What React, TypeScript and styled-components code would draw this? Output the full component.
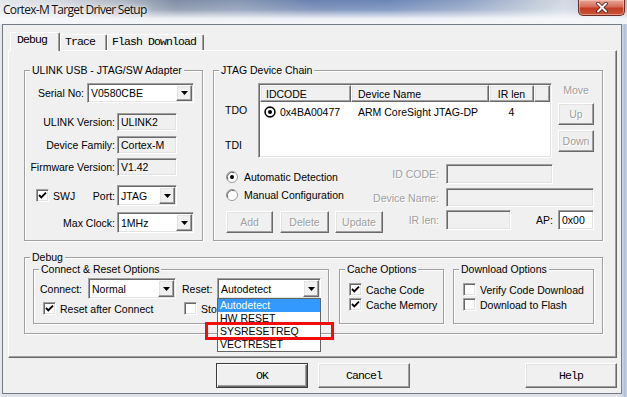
import React from 'react';
import styled, { createGlobalStyle, css } from 'styled-components';

const UI_FONT = '"Liberation Sans", Arial, sans-serif';
const MONO_FONT = '"Liberation Mono", "Courier New", monospace';

const GlobalStyle = createGlobalStyle`
  *, *::before, *::after { box-sizing: border-box; }
  html, body { margin: 0; padding: 0; }
  body {
    background: #dde3ea;
    color: #000;
    font-family: ${UI_FONT};
    font-size: 10.5px;
  }
`;

const sunken = css`
  border: 1px solid;
  border-color: #a0a0a0 #ffffff #ffffff #a0a0a0;
  box-shadow: inset 1px 1px 0 #696969, inset -1px -1px 0 #e3e3e3;
`;

const raised = css`
  border: 1px solid;
  border-color: #ffffff #696969 #696969 #ffffff;
  box-shadow: inset -1px -1px 0 #a0a0a0, inset 1px 1px 0 #e3e3e3;
  background: #f0f0f0;
`;

const disabledText = css`
  color: #a0a0a0;
  text-shadow: 1px 1px 0 #ffffff;
`;

const monoText = css`
  font-family: ${MONO_FONT};
  font-size: 11.5px;
  letter-spacing: -0.9px;
  color: #000;
`;

const Window = styled.div`
  width: 627px;
  height: 397px;
  display: flex;
  flex-direction: column;
  overflow: hidden;
  background: linear-gradient(90deg, #e9ebee 0px, #dfe3e8 3px, #dfe3e8 619px, #d3dce8 622px, #a9bcd6 625px, #cfdae7 627px);
`;

const TitleBar = styled.header`
  height: 24px;
  flex: none;
  display: flex;
  align-items: flex-start;
  justify-content: space-between;
  background:
    linear-gradient(180deg, rgba(246, 247, 249, 0) 0%, rgba(246, 247, 249, 0.2) 40%, rgba(248, 249, 251, 0.92) 78%, #f4f5f7 100%),
    linear-gradient(90deg, #e4e7eb 0%, #d3d8df 10%, #aab3c2 20%, #7f8da5 28%, #8797b3 38%, #6a82b0 50%, #6c86b6 62%, #8ea1c4 74%, #b9c4d6 84%, #d4dae3 90%, #a9b8cf 100%);
`;

const Title = styled.span`
  font-family: "Open Sans", "Liberation Sans", sans-serif;
  font-size: 12px;
  letter-spacing: -0.7px;
  line-height: 20px;
  padding-left: 3px;
  color: #111;
  text-shadow: 0 0 4px #fff, 0 0 8px #fff;
`;

const CloseButton = styled.div`
  width: 47px;
  height: 16px;
  margin-right: 2px;
  border: 1px solid #6b2a22;
  border-top: none;
  border-radius: 0 0 5px 5px;
  background: linear-gradient(180deg, #e8a797 0%, #d86b58 45%, #c13d25 55%, #cc5338 100%);
  box-shadow: inset 0 0 0 1px rgba(255, 210, 200, 0.5);
  display: flex;
  align-items: center;
  justify-content: center;
`;

const Client = styled.main`
  flex: 1;
  margin: 0 5px 3px 2px;
  padding: 7px 4px 0 5px;
  border: 1px solid #737b86;
  background: #f0f0f0;
  display: flex;
  flex-direction: column;
`;

const TabStrip = styled.div`
  display: flex;
  align-items: flex-end;
  height: 19px;
  margin: 0 0 -1px 2px;
  position: relative;
  z-index: 1;
`;

const Tab = styled.div<{ $w: number; $active?: boolean }>`
  width: ${(p) => p.$w}px;
  height: ${(p) => (p.$active ? 19 : 16)}px;
  margin-bottom: ${(p) => (p.$active ? 0 : 1)}px;
  padding-left: ${(p) => (p.$active ? 6 : 4)}px;
  border: 1px solid;
  border-bottom: none;
  border-color: #ffffff #696969 transparent #ffffff;
  border-radius: 2px 2px 0 0;
  box-shadow: inset -1px 0 0 #a0a0a0;
  background: #f0f0f0;
  ${monoText}
  line-height: 14px;
  white-space: nowrap;
`;

const TabPanel = styled.section`
  height: 308px;
  border: 1px solid;
  border-color: #ffffff #696969 #696969 #ffffff;
  box-shadow: inset -1px -1px 0 #a0a0a0;
  padding: 13px 0 0 15px;
`;

const TopRow = styled.div`
  display: flex;
  align-items: flex-start;
`;

const Group = styled.fieldset<{ $w: number; $h: number; $ml?: number; $mt?: number }>`
  margin: ${(p) => p.$mt ?? 0}px 0 0 ${(p) => p.$ml ?? 0}px;
  padding: 0;
  min-width: 0;
  flex: none;
  width: ${(p) => p.$w}px;
  height: ${(p) => p.$h}px;
  border: 1px solid #a0a0a0;
  box-shadow: inset 1px 1px 0 #ffffff, 1px 1px 0 #ffffff;
`;

const Legend = styled.legend`
  margin-left: 5px;
  padding: 0 2px;
  line-height: 13px;
  font-size: 10.5px;
  background: #f0f0f0;
  white-space: nowrap;
`;

const FormRow = styled.div<{ $mt: number; $pl?: number; $top?: boolean }>`
  display: flex;
  align-items: ${(p) => (p.$top ? 'flex-start' : 'center')};
  margin-top: ${(p) => p.$mt}px;
  padding-left: ${(p) => p.$pl ?? 0}px;
`;

const FieldLabel = styled.span<{ $w: number; $gap?: number; $left?: boolean; $ml?: number }>`
  flex: none;
  width: ${(p) => p.$w}px;
  margin: 0 ${(p) => p.$gap ?? 2}px 0 ${(p) => p.$ml ?? 0}px;
  text-align: ${(p) => (p.$left ? 'left' : 'right')};
  white-space: nowrap;
`;

const ComboBox = styled.div<{ $w: number; $h: number }>`
  flex: none;
  width: ${(p) => p.$w}px;
  height: ${(p) => p.$h}px;
  padding: 1px;
  display: flex;
  align-items: stretch;
  background: #ffffff;
  ${sunken}
`;

const ComboText = styled.span`
  flex: 1;
  padding-left: 2px;
  display: flex;
  align-items: center;
  white-space: nowrap;
  overflow: hidden;
`;

const ComboArrow = styled.span`
  flex: none;
  width: 16px;
  display: flex;
  align-items: center;
  justify-content: center;
  ${raised}
`;

const Field = styled.div<{ $w: number; $h: number; $white?: boolean }>`
  flex: none;
  width: ${(p) => p.$w}px;
  height: ${(p) => p.$h}px;
  padding-left: 3px;
  display: flex;
  align-items: center;
  white-space: nowrap;
  background: ${(p) => (p.$white ? '#ffffff' : '#f0f0f0')};
  ${sunken}
`;

const CheckItem = styled.label<{ $w?: number }>`
  display: flex;
  align-items: center;
  flex: none;
  width: ${(p) => (p.$w ? `${p.$w}px` : 'auto')};
  height: 13px;
  white-space: nowrap;
`;

const CheckBox = styled.span`
  flex: none;
  width: 13px;
  height: 13px;
  margin-right: 4px;
  display: flex;
  align-items: center;
  justify-content: center;
  background: #ffffff;
  ${sunken}
`;

const RadioItem = styled.label`
  display: flex;
  align-items: center;
  height: 14px;
  white-space: nowrap;
  gap: 6px;
`;

const PinColumn = styled.div`
  flex: none;
  width: 44px;
  padding-left: 11px;
  display: flex;
  flex-direction: column;
`;

const PinLabel = styled.span<{ $mt: number }>`
  margin-top: ${(p) => p.$mt}px;
  line-height: 13px;
`;

const ListBox = styled.div`
  flex: none;
  width: 294px;
  height: 75px;
  padding: 1px;
  background: #ffffff;
  ${sunken}
`;

const ListHead = styled.div`
  display: flex;
  height: 17px;
`;

const HeadCell = styled.div<{ $w: number; $center?: boolean; $pl?: number }>`
  flex: none;
  width: ${(p) => p.$w}px;
  padding-left: ${(p) => p.$pl ?? 0}px;
  display: flex;
  align-items: center;
  justify-content: ${(p) => (p.$center ? 'center' : 'flex-start')};
  white-space: nowrap;
  ${raised}
`;

const ListRow = styled.div`
  display: flex;
  height: 20px;
`;

const ListCell = styled.div<{ $w: number; $center?: boolean; $pl?: number }>`
  flex: none;
  width: ${(p) => p.$w}px;
  padding-left: ${(p) => p.$pl ?? 0}px;
  display: flex;
  align-items: center;
  gap: 4px;
  justify-content: ${(p) => (p.$center ? 'center' : 'flex-start')};
  white-space: nowrap;
`;

const MoveColumn = styled.div`
  flex: none;
  width: 36px;
  margin-left: 6px;
  display: flex;
  flex-direction: column;
  align-items: center;
`;

const MoveLabel = styled.span`
  line-height: 14px;
  ${disabledText}
`;

const SmallButton = styled.button<{ $w: number; $h?: number; $mt?: number }>`
  flex: none;
  width: ${(p) => p.$w}px;
  height: ${(p) => p.$h ?? 22}px;
  margin: ${(p) => p.$mt ?? 0}px 0 0 0;
  padding: 0;
  font-family: ${UI_FONT};
  font-size: 10.5px;
  ${raised}
  ${disabledText}
`;

const ChainRow = styled.div<{ $mt: number; $h: number }>`
  display: flex;
  align-items: flex-start;
  height: ${(p) => p.$h}px;
  margin-top: ${(p) => p.$mt}px;
  padding: 0 8px 0 12px;
`;

const ChainLeft = styled.div<{ $end?: boolean }>`
  flex: 1;
  display: flex;
  align-self: ${(p) => (p.$end ? 'flex-end' : 'flex-start')};
`;

const ChainRight = styled.div`
  display: flex;
  align-items: center;
`;

const ChainLabel = styled.span<{ $dim?: boolean; $push?: boolean }>`
  margin: 0 ${(p) => (p.$push ? 5 : 7)}px 0 ${(p) => (p.$push ? 'auto' : '0')};
  white-space: nowrap;
  ${(p) => p.$dim && disabledText}
`;

const FieldArea = styled.div`
  width: 148px;
  display: flex;
  align-items: center;
`;

const ButtonGroup = styled.div`
  display: flex;
  gap: 7px;
  & > :last-child {
    margin-left: -1px;
  }
`;

const SubRow = styled.div`
  display: flex;
  align-items: flex-start;
  margin: -1px 0 0 8px;
`;

const ConnectRow = styled.div`
  display: flex;
  align-items: center;
  height: 21px;
  margin-top: 2px;
  padding-left: 6px;
`;

const ResetAnchor = styled.div`
  position: relative;
  flex: none;
`;

const DropList = styled.ul`
  position: absolute;
  top: 20px;
  left: 0;
  z-index: 5;
  width: 104px;
  margin: 0;
  padding: 0;
  list-style: none;
  background: #ffffff;
  border: 1px solid #646464;
`;

const DropItem = styled.li<{ $selected?: boolean }>`
  height: 13px;
  line-height: 13px;
  padding-left: 2px;
  white-space: nowrap;
  background: ${(p) => (p.$selected ? '#3399ff' : 'transparent')};
  color: ${(p) => (p.$selected ? '#ffffff' : '#000000')};
`;

const Highlight = styled.div`
  position: absolute;
  top: 44px;
  left: -12px;
  z-index: 6;
  width: 129px;
  height: 18px;
  border: 3px solid #f20c0c;
`;

const CheckRow = styled.div<{ $mt: number; $pl: number }>`
  display: flex;
  align-items: center;
  margin-top: ${(p) => p.$mt}px;
  padding-left: ${(p) => p.$pl}px;
`;

const ButtonBar = styled.footer`
  display: flex;
  align-items: center;
  margin-top: 5px;
  padding-left: 208px;
`;

const DialogButton = styled.button<{ $default?: boolean; $ml?: string }>`
  flex: none;
  width: 92px;
  height: 25px;
  margin-left: ${(p) => p.$ml ?? '0'};
  padding: 0;
  ${monoText}
  ${raised}
  ${(p) =>
    p.$default &&
    css`
      border: 1px solid #3c3c3c;
      box-shadow: inset 1px 1px 0 #ffffff, inset -1px -1px 0 #696969, inset -2px -2px 0 #a0a0a0;
    `}
`;

const Arrow = () => (
  <svg width="7" height="4" viewBox="0 0 7 4">
    <polygon points="0,0 7,0 3.5,4" fill="#000" />
  </svg>
);

const Tick = () => (
  <svg width="9" height="9" viewBox="0 0 9 9">
    <polyline points="1,4 3.3,6.4 8,1.6" fill="none" stroke="#000" strokeWidth="1.9" />
  </svg>
);

const Radio = ({ checked }: { checked?: boolean }) => (
  <svg width="12" height="12" viewBox="0 0 12 12">
    <circle cx="6" cy="6" r="5.5" fill="#fff" stroke="#9a9a9a" />
    <path d="M1.8 8.5 A5 5 0 0 1 8.5 1.8" fill="none" stroke="#5f5f5f" />
    {checked && <circle cx="6" cy="6" r="2" fill="#000" />}
  </svg>
);

const TargetIcon = () => (
  <svg width="12" height="12" viewBox="0 0 12 12">
    <circle cx="6" cy="6" r="4.9" fill="#fff" stroke="#000" strokeWidth="1.6" />
    <circle cx="6" cy="6" r="2.1" fill="#000" />
  </svg>
);

const CloseGlyph = () => (
  <svg width="14" height="11" viewBox="0 0 14 11">
    <path d="M3 1.5 L11 9.5 M11 1.5 L3 9.5" stroke="#4b1a12" strokeWidth="3.6" strokeLinecap="round" />
    <path d="M3 1.5 L11 9.5 M11 1.5 L3 9.5" stroke="#fff" strokeWidth="2" strokeLinecap="round" />
  </svg>
);

const Combo = ({ w, h = 21, value }: { w: number; h?: number; value: string }) => (
  <ComboBox $w={w} $h={h}>
    <ComboText>{value}</ComboText>
    <ComboArrow>
      <Arrow />
    </ComboArrow>
  </ComboBox>
);

const Check = ({ checked, label, w }: { checked?: boolean; label: string; w?: number }) => (
  <CheckItem $w={w}>
    <CheckBox>{checked && <Tick />}</CheckBox>
    {label}
  </CheckItem>
);

const resetOptions = ['Autodetect', 'HW RESET', 'SYSRESETREQ', 'VECTRESET'];

export default function App() {
  return (
    <>
      <GlobalStyle />
      <Window>
        <TitleBar>
          <Title>Cortex-M Target Driver Setup</Title>
          <CloseButton>
            <CloseGlyph />
          </CloseButton>
        </TitleBar>
        <Client>
          <TabStrip>
            <Tab $w={50} $active>Debug</Tab>
            <Tab $w={47}>Trace</Tab>
            <Tab $w={97}>Flash Download</Tab>
          </TabStrip>
          <TabPanel>
            <TopRow>
              <Group $w={179} $h={177}>
                <Legend>ULINK USB - JTAG/SW Adapter</Legend>
                <FormRow $mt={6}>
                  <FieldLabel $w={59} $gap={3}>Serial No:</FieldLabel>
                  <Combo w={107} h={20} value="V0580CBE" />
                </FormRow>
                <FormRow $mt={10}>
                  <FieldLabel $w={90}>ULINK Version:</FieldLabel>
                  <Field $w={60} $h={18}>ULINK2</Field>
                </FormRow>
                <FormRow $mt={5}>
                  <FieldLabel $w={90}>Device Family:</FieldLabel>
                  <Field $w={60} $h={18}>Cortex-M</Field>
                </FormRow>
                <FormRow $mt={4}>
                  <FieldLabel $w={90}>Firmware Version:</FieldLabel>
                  <Field $w={60} $h={18}>V1.42</Field>
                </FormRow>
                <FormRow $mt={9} $pl={11}>
                  <Check checked label="SWJ" w={54} />
                  <FieldLabel $w={25}>Port:</FieldLabel>
                  <Combo w={60} value="JTAG" />
                </FormRow>
                <FormRow $mt={6}>
                  <FieldLabel $w={90}>Max Clock:</FieldLabel>
                  <Combo w={77} value="1MHz" />
                </FormRow>
              </Group>

              <Group $w={390} $h={177} $ml={10}>
                <Legend>JTAG Device Chain</Legend>
                <FormRow $mt={6} $top>
                  <PinColumn>
                    <PinLabel $mt={21}>TDO</PinLabel>
                    <PinLabel $mt={22}>TDI</PinLabel>
                  </PinColumn>
                  <ListBox>
                    <ListHead>
                      <HeadCell $w={91} $pl={5}>IDCODE</HeadCell>
                      <HeadCell $w={138} $pl={6}>Device Name</HeadCell>
                      <HeadCell $w={45} $center>IR len</HeadCell>
                      <HeadCell $w={16} />
                    </ListHead>
                    <ListRow>
                      <ListCell $w={91} $pl={4}>
                        <TargetIcon />
                        0x4BA00477
                      </ListCell>
                      <ListCell $w={138} $pl={7}>ARM CoreSight JTAG-DP</ListCell>
                      <ListCell $w={45} $center>4</ListCell>
                    </ListRow>
                  </ListBox>
                  <MoveColumn>
                    <MoveLabel>Move</MoveLabel>
                    <SmallButton $w={36} $mt={6} disabled>Up</SmallButton>
                    <SmallButton $w={36} $mt={5} disabled>Down</SmallButton>
                  </MoveColumn>
                </FormRow>

                <ChainRow $mt={6} $h={20}>
                  <ChainLeft $end>
                    <RadioItem>
                      <Radio checked />
                      Automatic Detection
                    </RadioItem>
                  </ChainLeft>
                  <ChainRight>
                    <ChainLabel $dim>ID CODE:</ChainLabel>
                    <FieldArea>
                      <Field $w={107} $h={20} />
                    </FieldArea>
                  </ChainRight>
                </ChainRow>

                <ChainRow $mt={4} $h={19}>
                  <ChainLeft>
                    <RadioItem>
                      <Radio />
                      Manual Configuration
                    </RadioItem>
                  </ChainLeft>
                  <ChainRight>
                    <ChainLabel $dim>Device Name:</ChainLabel>
                    <FieldArea>
                      <Field $w={148} $h={19} />
                    </FieldArea>
                  </ChainRight>
                </ChainRow>

                <ChainRow $mt={3} $h={23}>
                  <ChainLeft $end>
                    <ButtonGroup>
                      <SmallButton $w={47} disabled>Add</SmallButton>
                      <SmallButton $w={49} disabled>Delete</SmallButton>
                      <SmallButton $w={48} disabled>Update</SmallButton>
                    </ButtonGroup>
                  </ChainLeft>
                  <ChainRight>
                    <ChainLabel $dim>IR len:</ChainLabel>
                    <FieldArea>
                      <Field $w={65} $h={20} />
                      <ChainLabel $push>AP:</ChainLabel>
                      <Field $w={36} $h={20} $white>0x00</Field>
                    </FieldArea>
                  </ChainRight>
                </ChainRow>
              </Group>
            </TopRow>

            <Group $w={579} $h={83} $mt={10}>
              <Legend>Debug</Legend>
              <SubRow>
                <Group $w={296} $h={61}>
                  <Legend>Connect &amp; Reset Options</Legend>
                  <ConnectRow>
                    <FieldLabel $w={48} $gap={0} $left>Connect:</FieldLabel>
                    <Combo w={88} value="Normal" />
                    <FieldLabel $w={35} $gap={0} $ml={6} $left>Reset:</FieldLabel>
                    <ResetAnchor>
                      <Combo w={104} value="Autodetect" />
                      <DropList>
                        {resetOptions.map((o, i) => (
                          <DropItem key={o} $selected={i === 0}>{o}</DropItem>
                        ))}
                      </DropList>
                      <Highlight />
                    </ResetAnchor>
                  </ConnectRow>
                  <CheckRow $mt={3} $pl={9}>
                    <Check checked label="Reset after Connect" w={141} />
                    <Check label="Stop after Reset" />
                  </CheckRow>
                </Group>

                <Group $w={105} $h={61} $ml={10}>
                  <Legend>Cache Options</Legend>
                  <CheckRow $mt={7} $pl={9}>
                    <Check checked label="Cache Code" />
                  </CheckRow>
                  <CheckRow $mt={2} $pl={9}>
                    <Check checked label="Cache Memory" />
                  </CheckRow>
                </Group>

                <Group $w={141} $h={61} $ml={9}>
                  <Legend>Download Options</Legend>
                  <CheckRow $mt={7} $pl={9}>
                    <Check label="Verify Code Download" />
                  </CheckRow>
                  <CheckRow $mt={2} $pl={9}>
                    <Check label="Download to Flash" />
                  </CheckRow>
                </Group>
              </SubRow>
            </Group>
          </TabPanel>
          <ButtonBar>
            <DialogButton $default>OK</DialogButton>
            <DialogButton $ml="10px">Cancel</DialogButton>
            <DialogButton $ml="auto">Help</DialogButton>
          </ButtonBar>
        </Client>
      </Window>
    </>
  );
}
